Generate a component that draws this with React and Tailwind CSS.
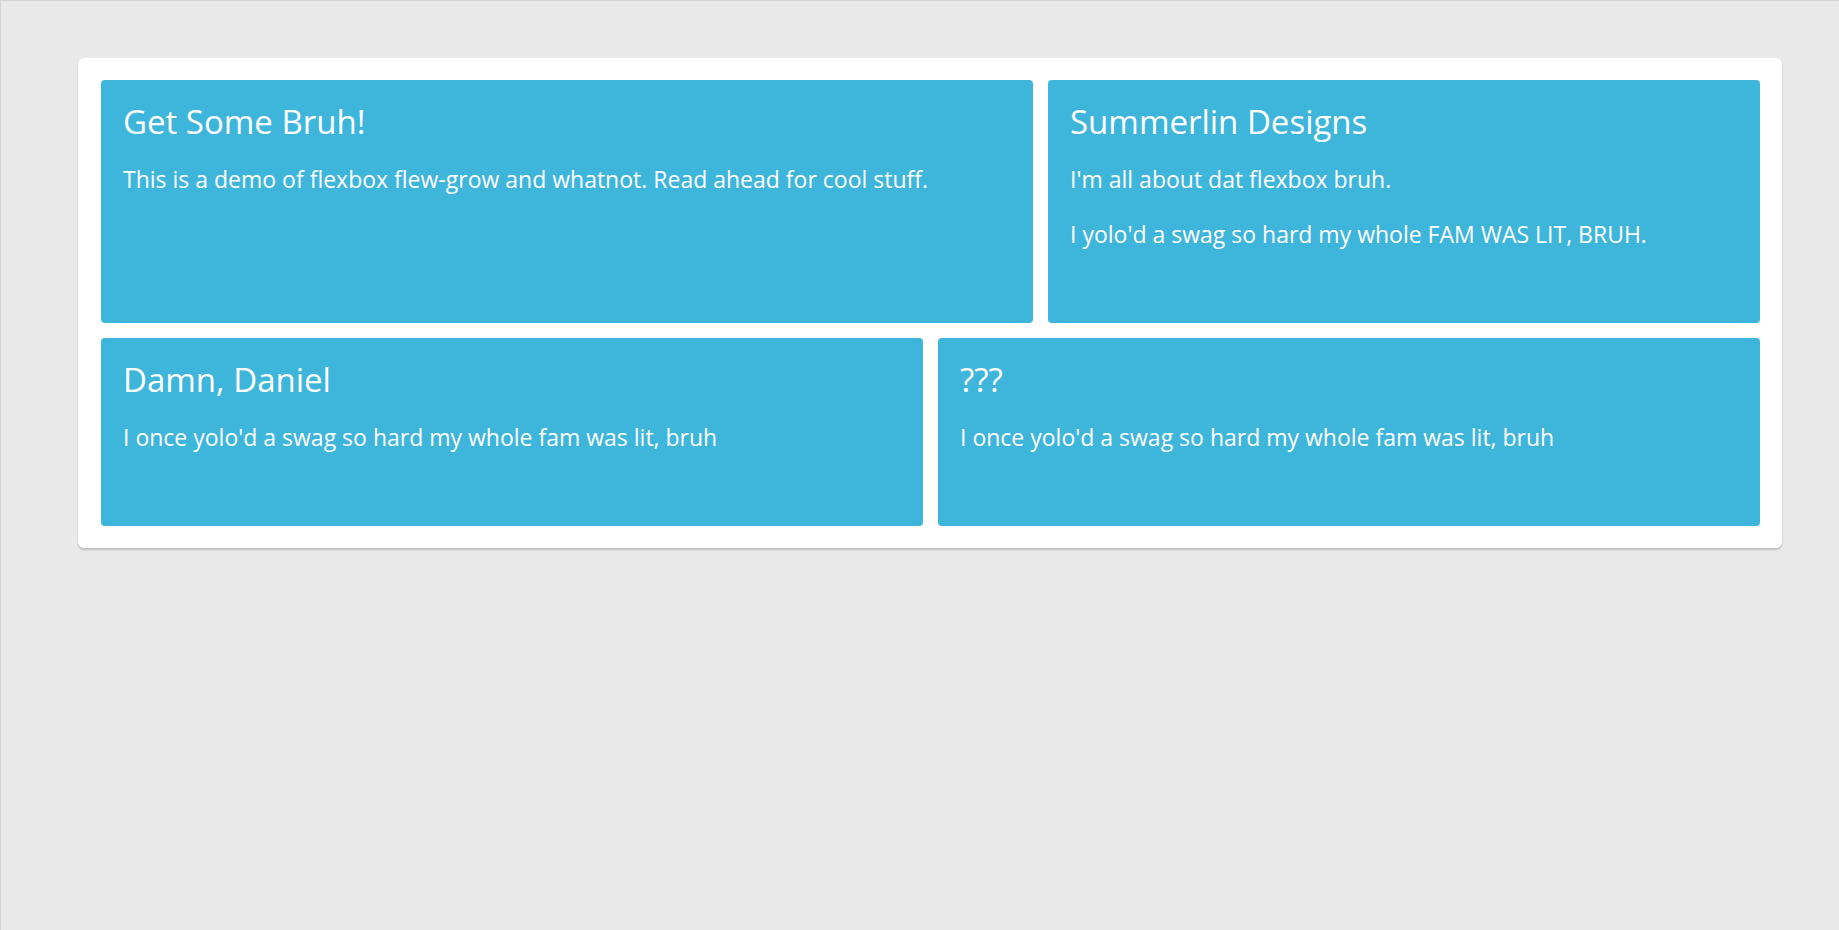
const cards = [
  [
    { title: "Get Some Bruh!", body: ["This is a demo of flexbox flew-grow and whatnot. Read ahead for cool stuff."], grow: "grow-[888]" },
    { title: "Summerlin Designs", body: ["I'm all about dat flexbox bruh.", "I yolo'd a swag so hard my whole FAM WAS LIT, BRUH."], grow: "grow-[668]" },
  ],
  [
    { title: "Damn, Daniel", body: ["I once yolo'd a swag so hard my whole fam was lit, bruh"], grow: "grow" },
    { title: "???", body: ["I once yolo'd a swag so hard my whole fam was lit, bruh"], grow: "grow" },
  ],
];

function Card({ title, body, grow }) {
  return (
    <div className={`${grow} basis-0 rounded-[4px] bg-[#3eb5db] px-[22px] pt-[22px] pb-[48px] text-white`}>
      <h2 className="text-[33px] leading-[40px] mb-[23px]">{title}</h2>
      {body.map((t, i) => (
        <p key={i} className="text-[23px] leading-[28px] mb-[27px]">
          {t}
        </p>
      ))}
    </div>
  );
}

export default function App() {
  return (
    <div
      className="min-h-screen bg-[#e8e9e8] border-t border-l border-[#d4d4d4] pt-[57px] pl-[77px] pr-[57px]"
      style={{ fontFamily: '"Open Sans", "Noto Sans", sans-serif' }}
    >
      <div className="bg-white rounded-[6px] p-[22px] pl-[23px] shadow-[0_2px_2px_rgba(0,0,0,0.18)] flex flex-col gap-[15px]">
        {cards.map((row, r) => (
          <div key={r} className="flex gap-[15px]">
            {row.map((c) => (
              <Card key={c.title} {...c} />
            ))}
          </div>
        ))}
      </div>
    </div>
  );
}
